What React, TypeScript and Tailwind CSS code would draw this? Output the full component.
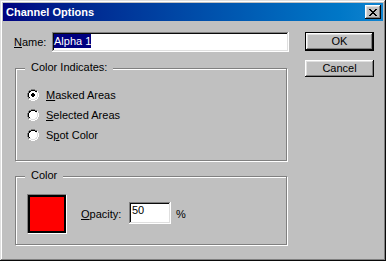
import type { ReactNode } from "react";

const raised =
  "shadow-[inset_-1px_-1px_#0a0a0a,inset_1px_1px_#ffffff,inset_-2px_-2px_#808080,inset_2px_2px_#dfdfdf]";
const sunken =
  "shadow-[inset_-1px_-1px_#ffffff,inset_1px_1px_#808080,inset_-2px_-2px_#dfdfdf,inset_2px_2px_#0a0a0a]";
const etched = "border border-[#808080] shadow-[inset_1px_1px_#ffffff,1px_1px_#ffffff]";

const palette: Record<string, string> = {
  g: "#808080",
  k: "#000000",
  w: "#ffffff",
  l: "#dfdfdf",
};

// classic 12x12 radio bitmap
const radioRows = [
  "....gggg....",
  "..ggkkkkgg..",
  ".gkkwwwwkkw.",
  ".gkwwwwwwlw.",
  "gkwwwwwwwwlw",
  "gkwwwwwwwwlw",
  "gkwwwwwwwwlw",
  "gkwwwwwwwwlw",
  ".gkwwwwwwlw.",
  ".gllwwwwllw.",
  "..wwllllww..",
  "....wwww....",
];

const dotRows = [
  "............",
  "............",
  "............",
  "............",
  ".....kk.....",
  "....kkkk....",
  "....kkkk....",
  ".....kk.....",
];

function Pixels({ rows }: { rows: string[] }) {
  return (
    <>
      {rows.flatMap((row, y) =>
        row.split("").map((c, x) =>
          palette[c] ? (
            <rect key={`${x}-${y}`} x={x} y={y} width={1} height={1} fill={palette[c]} />
          ) : null
        )
      )}
    </>
  );
}

function Radio({ checked, children }: { checked?: boolean; children: ReactNode }) {
  return (
    <div className="flex h-[20px] items-center gap-[7px]">
      <svg width="12" height="12" viewBox="0 0 12 12" shapeRendering="crispEdges">
        <Pixels rows={radioRows} />
        {checked && <Pixels rows={dotRows} />}
      </svg>
      <span>{children}</span>
    </div>
  );
}

function Key({ children }: { children: ReactNode }) {
  return <u className="underline decoration-1 underline-offset-[1px]">{children}</u>;
}

function Group({ title, className, children }: { title: string; className: string; children: ReactNode }) {
  return (
    <div className={`relative ml-[1px] w-[272px] ${etched} ${className}`}>
      <span className="absolute left-[9px] top-[-8px] bg-[#c0c0c0] px-[6px] leading-[13px]">{title}</span>
      {children}
    </div>
  );
}

export default function App() {
  return (
    <div
      className={`flex h-[261px] w-[386px] flex-col bg-[#c0c0c0] p-[3px] font-['Liberation_Sans',Arial,sans-serif] text-[11px] text-black shadow-[inset_-1px_-1px_#0a0a0a,inset_1px_1px_#dfdfdf,inset_-2px_-2px_#808080,inset_2px_2px_#ffffff]`}
    >
      {/* Title bar */}
      <div className="flex h-[18px] items-center justify-between bg-gradient-to-r from-[#000080] to-[#1084d0] pl-[3px] pr-[2px]">
        <span className="font-bold text-white">Channel Options</span>
        <div className={`flex h-[14px] w-[16px] items-center justify-center bg-[#c0c0c0] ${raised}`}>
          <svg width="8" height="7" viewBox="0 0 8 7" shapeRendering="crispEdges">
            <path
              d="M0 0h2v1h-2zM6 0h2v1h-2zM1 1h2v1h-2zM5 1h2v1h-2zM2 2h4v1h-4zM3 3h2v1h-2zM2 4h4v1h-4zM1 5h2v1h-2zM5 5h2v1h-2zM0 6h2v1h-2zM6 6h2v1h-2z"
              fill="#000"
            />
          </svg>
        </div>
      </div>

      {/* Body */}
      <div className="flex flex-1 pl-[11px] pt-[11px]">
        <div className="flex w-[276px] flex-col">
          <div className="flex h-[20px] items-center">
            <span className="w-[38px]">
              <Key>N</Key>ame:
            </span>
            <div className={`flex h-[20px] w-[237px] items-start bg-white pl-[2px] pt-[2px] ${sunken}`}>
              <span className="bg-[#000080] leading-[14px] text-white">Alpha 1</span>
            </div>
          </div>

          <Group title="Color Indicates:" className="mt-[16px] h-[93px]">
            <div className="flex flex-col pl-[11px] pt-[16px]">
              <Radio checked>
                <Key>M</Key>asked Areas
              </Radio>
              <Radio>
                <Key>S</Key>elected Areas
              </Radio>
              <Radio>
                S<Key>p</Key>ot Color
              </Radio>
            </div>
          </Group>

          <Group title="Color" className="mt-[15px] h-[69px]">
            <div className="flex items-start pl-[11px] pt-[17px]">
              <div className="h-[40px] w-[40px] border-t border-l border-[#808080] border-b-white border-r-white border-b border-r">
                <div className="h-full w-full border-2 border-black bg-[#ff0000]" />
              </div>
              <span className="ml-[14px] mt-[12px] w-[48px]">
                <Key>O</Key>pacity:
              </span>
              <div className={`mt-[8px] h-[22px] w-[42px] bg-white pl-[3px] pt-[2px] leading-[13px] ${sunken}`}>
                50
              </div>
              <span className="ml-[5px] mt-[12px]">%</span>
            </div>
          </Group>
        </div>

        <div className="ml-[15px] flex flex-col">
          <button className="h-[19px] w-[69px] border border-black bg-[#c0c0c0]">
            <div className={`flex h-full w-full items-center justify-center ${raised}`}>OK</div>
          </button>
          <button className={`mt-[9px] flex h-[17px] w-[69px] items-center justify-center bg-[#c0c0c0] ${raised}`}>
            Cancel
          </button>
        </div>
      </div>
    </div>
  );
}
